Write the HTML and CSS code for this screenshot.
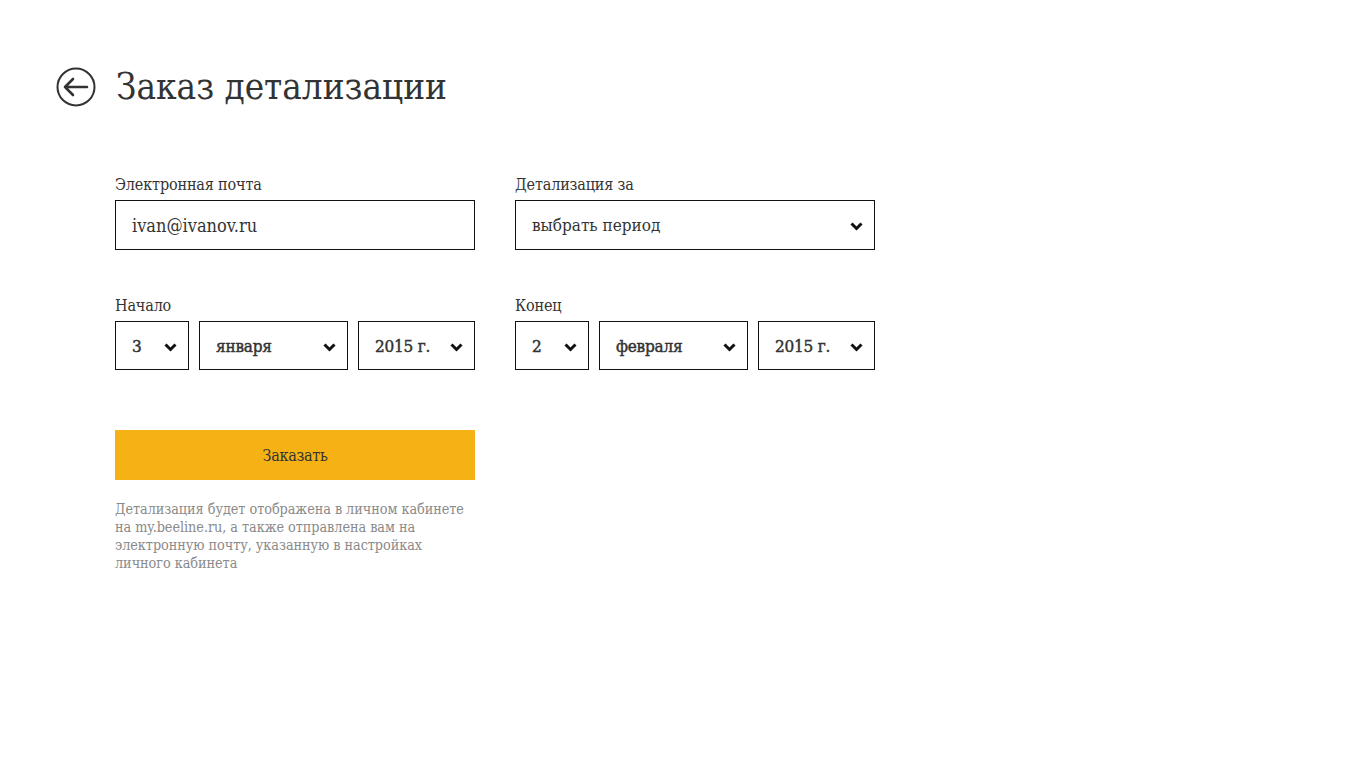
FILE: index.html
```html
<!DOCTYPE html>
<html lang="ru">
<head>
<meta charset="utf-8">
<title>Заказ детализации</title>
<link rel="stylesheet" href="styles.css">
</head>
<body>
<div class="page">
  <header class="header">
    <a class="back" href="#" aria-label="Назад">
      <svg width="40" height="40" viewBox="0 0 40 40">
        <circle cx="20" cy="20" r="18.5" fill="none" stroke="#333" stroke-width="2"/>
        <path d="M9 20 H31 M17 12 L9 20 L17 28" fill="none" stroke="#333" stroke-width="2.6" stroke-linecap="round" stroke-linejoin="round"/>
      </svg>
    </a>
    <h1 class="title">Заказ детализации</h1>
  </header>

  <div class="form">
    <div class="row">
      <div class="field">
        <div class="label">Электронная почта</div>
        <div class="box input">ivan@ivanov.ru</div>
      </div>
      <div class="field">
        <div class="label">Детализация за</div>
        <div class="box select">
          <span class="value">выбрать период</span>
          <svg class="chev" width="13" height="9" viewBox="0 0 13 9"><path d="M1.5 1.5 L6.5 6.5 L11.5 1.5" fill="none" stroke="#111" stroke-width="3"/></svg>
        </div>
      </div>
    </div>

    <div class="row row-dates">
      <div class="field">
        <div class="label">Начало</div>
        <div class="dates">
          <div class="box select day"><span class="value bold">3</span><svg class="chev" width="13" height="9" viewBox="0 0 13 9"><path d="M1.5 1.5 L6.5 6.5 L11.5 1.5" fill="none" stroke="#111" stroke-width="3"/></svg></div>
          <div class="box select month"><span class="value bold">января</span><svg class="chev" width="13" height="9" viewBox="0 0 13 9"><path d="M1.5 1.5 L6.5 6.5 L11.5 1.5" fill="none" stroke="#111" stroke-width="3"/></svg></div>
          <div class="box select year"><span class="value bold">2015 г.</span><svg class="chev" width="13" height="9" viewBox="0 0 13 9"><path d="M1.5 1.5 L6.5 6.5 L11.5 1.5" fill="none" stroke="#111" stroke-width="3"/></svg></div>
        </div>
      </div>
      <div class="field">
        <div class="label">Конец</div>
        <div class="dates">
          <div class="box select day"><span class="value bold">2</span><svg class="chev" width="13" height="9" viewBox="0 0 13 9"><path d="M1.5 1.5 L6.5 6.5 L11.5 1.5" fill="none" stroke="#111" stroke-width="3"/></svg></div>
          <div class="box select month"><span class="value bold">февраля</span><svg class="chev" width="13" height="9" viewBox="0 0 13 9"><path d="M1.5 1.5 L6.5 6.5 L11.5 1.5" fill="none" stroke="#111" stroke-width="3"/></svg></div>
          <div class="box select year"><span class="value bold">2015 г.</span><svg class="chev" width="13" height="9" viewBox="0 0 13 9"><path d="M1.5 1.5 L6.5 6.5 L11.5 1.5" fill="none" stroke="#111" stroke-width="3"/></svg></div>
        </div>
      </div>
    </div>

    <div class="submit">
      <button class="btn" type="button">Заказать</button>
      <p class="note">Детализация будет отображена в личном кабинете на my.beeline.ru, а также отправлена вам на электронную почту, указанную в настройках личного кабинета</p>
    </div>
  </div>
</div>
</body>
</html>
```

FILE: styles.css
```css
* { box-sizing: border-box; }
html, body { margin: 0; padding: 0; background: #fff; }
body {
  font-family: "DejaVu Serif Condensed", "DejaVu Serif", "Liberation Serif", serif;
  color: #333;
}
.page { padding: 67px 0 0 56px; }
.header { display: flex; align-items: center; gap: 20px; height: 40px; }
.back { display: block; width: 40px; height: 40px; }
.back svg { display: block; }
.title {
  margin: 0;
  font-weight: normal;
  font-size: 36.5px;
  line-height: 40px;
  color: #333;
}
.form { margin: 68px 0 0 59px; width: 760px; }
.row { display: grid; grid-template-columns: 360px 360px; column-gap: 40px; }
.row-dates { margin-top: 46px; }
.label { font-size: 16px; line-height: 20px; height: 25px; color: #333; letter-spacing: -0.15px; }
.box {
  height: 50px;
  border: 1px solid #111;
  display: flex;
  align-items: center;
  padding: 0 16px;
  font-size: 17px;
  color: #333;
}
.input { font-size: 18px; padding-top: 1px; }
.select { justify-content: space-between; padding-right: 11px; }
.dates { display: flex; gap: 10px; }
.dates .box { height: 49px; }
.day { width: 74px; }
.month { width: 149px; }
.year { width: 117px; }
.bold { font-size: 17px; -webkit-text-stroke: 0.45px #333; letter-spacing: -0.2px; }
.chev { display: block; margin-top: 3px; }
.submit { width: 360px; margin-top: 60px; }
.btn {
  display: block;
  width: 360px;
  height: 50px;
  border: 0;
  background: #f6b115;
  color: #333;
  font-family: inherit;
  font-size: 16px;
  letter-spacing: -0.3px;
  cursor: pointer;
}
.note {
  margin: 20px 0 0;
  font-size: 14.3px;
  line-height: 18px;
  color: #8a8a8a;
  letter-spacing: -0.05px;
  padding-right: 4px;
}
```
